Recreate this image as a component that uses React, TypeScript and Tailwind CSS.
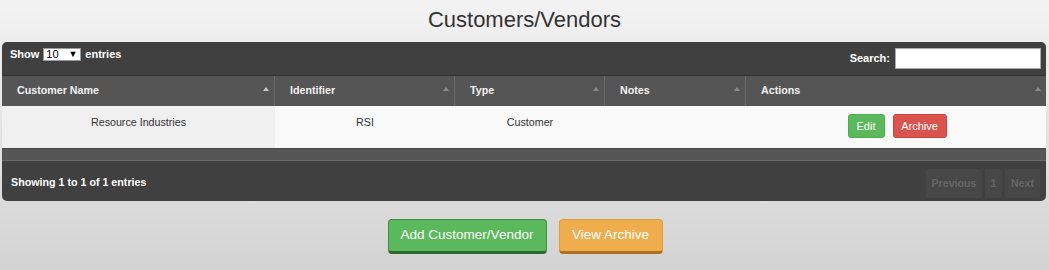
import React from "react";

const cols = [
  { name: "Customer Name", active: true },
  { name: "Identifier" },
  { name: "Type" },
  { name: "Notes" },
  { name: "Actions" },
];

function Arrow({ active }: { active?: boolean }) {
  return (
    <svg width="6" height="4" viewBox="0 0 6 4" className="shrink-0">
      <polygon points="3,0 6,4 0,4" fill={active ? "#c8c8c8" : "#8a8a8a"} />
    </svg>
  );
}

export default function App() {
  return (
    <div
      className="h-[270px] w-[1049px] bg-gradient-to-b from-[#f3f3f3] to-[#d3d3d3] text-[#333]"
      style={{ fontFamily: '"Liberation Sans", Arial, sans-serif' }}
    >
      <div className="flex h-[42px] items-center justify-center">
        <h1 className="text-[22px] font-normal leading-none text-[#333] -mt-[2px]">Customers/Vendors</h1>
      </div>

      <div className="mx-[2px] w-[1044px] overflow-hidden rounded-[5px] bg-[#404040]">
        {/* top bar */}
        <div className="flex h-[33px] items-center justify-between pl-[8px] pr-[5px] text-[11px] font-bold text-white">
          <div className="flex items-center gap-[4px] -mt-[8px]">
            <span>Show</span>
            <div className="flex h-[13px] w-[38px] items-center justify-between border border-[#999] bg-white pl-[2px] pr-[3px] text-[11px] font-normal leading-none text-black">
              <span>10</span>
              <span className="text-[9px]">▼</span>
            </div>
            <span>entries</span>
          </div>
          <div className="flex items-center gap-[5px]">
            <span>Search:</span>
            <div className="h-[21px] w-[146px] border border-[#aaa] bg-white" />
          </div>
        </div>

        {/* header */}
        <div className="grid h-[31px] grid-cols-[273px_180px_150px_141px_300px] border-t border-[#333] bg-[#555] text-[10.7px] font-bold text-[#f2f2f2]">
          {cols.map((c, i) => (
            <div
              key={c.name}
              className={`flex items-start justify-between pl-[15px] pr-[5px] pt-[6px] ${i < 4 ? "border-r border-[#6a6a6a]" : ""}`}
            >
              <span>{c.name}</span>
              <span className="pt-[5px]">
                <Arrow active={c.active} />
              </span>
            </div>
          ))}
        </div>

        {/* body row */}
        <div className="grid h-[42px] grid-cols-[273px_180px_150px_141px_300px] text-[10.7px] text-[#333]">
          <div className="bg-[#f0f0f0] pt-[8px] text-center">Resource Industries</div>
          <div className="bg-[#f9f9f9] pt-[8px] text-center">RSI</div>
          <div className="bg-[#f9f9f9] pt-[8px] text-center">Customer</div>
          <div className="bg-[#f9f9f9]" />
          <div className="flex justify-center gap-[8px] bg-[#f9f9f9] pt-[8px] pl-[2px]">
            <button className="h-[24px] w-[37px] rounded-[3px] border border-[#4cae4c] bg-[#5cb85c] text-[11px] text-white">
              Edit
            </button>
            <button className="h-[24px] w-[54px] rounded-[3px] border border-[#d43f3a] bg-[#d9534f] text-[11px] text-white">
              Archive
            </button>
          </div>
        </div>

        {/* band */}
        <div className="h-[13px] border-t border-[#4a4a4a] bg-[#555] border-b border-b-[#6a6a6a]" />

        {/* footer */}
        <div className="flex h-[40px] items-center justify-between pl-[9px] pr-[6px] text-[10.7px] font-bold text-white">
          <span className="pt-[2px]">Showing 1 to 1 of 1 entries</span>
          <div className="flex gap-[3px] pt-[7px] pb-[3px] text-[#666]">
            <div className="flex h-[29px] w-[56px] items-center justify-center rounded-[2px] bg-[#474747]">Previous</div>
            <div className="flex h-[29px] w-[17px] items-center justify-center rounded-[2px] bg-[#474747]">1</div>
            <div className="flex h-[29px] w-[35px] items-center justify-center rounded-[2px] bg-[#474747]">Next</div>
          </div>
        </div>
      </div>

      <div className="mt-[18px] flex justify-center gap-[12px] pl-[1px]">
        <button className="h-[35px] w-[159px] rounded-[4px] border border-[#3e8f3e] border-b-[3px] border-b-[#2d6a2d] bg-[#5cb85c] text-[13.5px] text-white">
          Add Customer/Vendor
        </button>
        <button className="h-[35px] w-[104px] rounded-[4px] border border-[#e09b3d] border-b-[3px] border-b-[#b07020] bg-[#f0ad4e] text-[13.5px] text-white">
          View Archive
        </button>
      </div>
    </div>
  );
}
